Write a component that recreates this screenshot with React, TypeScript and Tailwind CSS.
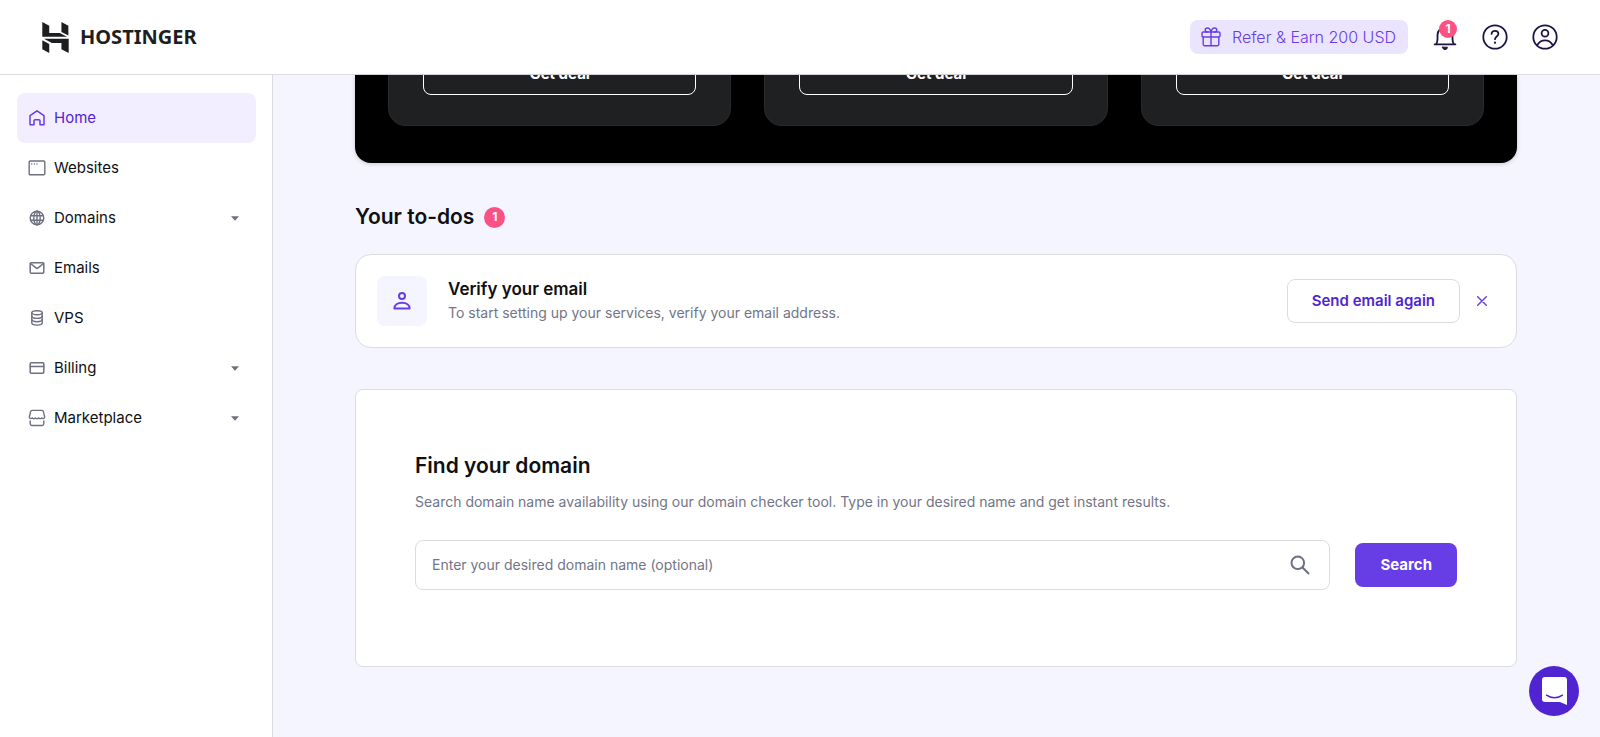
import type { ReactNode } from 'react';

type IconProps = { className?: string };

const line = {
  fill: 'none',
  stroke: 'currentColor',
  strokeLinecap: 'round' as const,
  strokeLinejoin: 'round' as const,
};

function LogoMark() {
  return (
    <svg viewBox="129 63 80 94" className="h-[31px] w-[27px] text-[#1d1e20]" fill="currentColor" aria-hidden="true">
      <path d="M129 63 150 74V96H182L204 108H129Z" />
      <path d="M187 63 208 74V104L187 93Z" />
      <path d="M129 118 150 130V157L129 146Z" />
      <path d="M134 114H209V157L187 146V127H158Z" />
    </svg>
  );
}

function HomeIcon({ className }: IconProps) {
  return (
    <svg viewBox="0 0 18 18" className={className} {...line} strokeWidth="1.500" aria-hidden="true">
      <path d="M2 6.600 9 1.800l7 4.800v9.100h-4v-3.900a1.100 1.100 0 0 0-1.100-1.100H7.100A1.100 1.100 0 0 0 6 11.800v3.900H2Z" />
    </svg>
  );
}

function WebsitesIcon({ className }: IconProps) {
  return (
    <svg viewBox="0 0 18 18" className={className} {...line} strokeWidth="1.400" aria-hidden="true">
      <rect x="1.200" y="2" width="15.600" height="13.800" rx="1" />
      <path d="M3.700 5h.1M6.300 5h.1M8.900 5h.1" />
    </svg>
  );
}

function GlobeIcon({ className }: IconProps) {
  return (
    <svg viewBox="0 0 18 18" className={className} {...line} strokeWidth="1.400" aria-hidden="true">
      <circle cx="9" cy="9" r="6.800" />
      <ellipse cx="9" cy="9" rx="3.200" ry="6.800" />
      <path d="M9 2.200v13.600M2.700 6.700h12.600M2.700 11.300h12.600" />
    </svg>
  );
}

function MailIcon({ className }: IconProps) {
  return (
    <svg viewBox="0 0 18 18" className={className} {...line} strokeWidth="1.500" aria-hidden="true">
      <rect x="2.200" y="3.700" width="13.600" height="10.600" rx="1" />
      <path d="m2.500 4.500 5.800 4.600a1.100 1.100 0 0 0 1.400 0l5.800-4.600" />
    </svg>
  );
}

function DatabaseIcon({ className }: IconProps) {
  return (
    <svg viewBox="0 0 18 18" className={className} {...line} strokeWidth="1.400" aria-hidden="true">
      <ellipse cx="9" cy="3.800" rx="5.200" ry="2" />
      <path d="M3.800 4v10c0 1.200 2.300 2.100 5.200 2.100s5.200-.9 5.200-2.100V4" />
      <path d="M3.800 7.300c0 1.200 2.300 2.100 5.200 2.100s5.200-.9 5.200-2.100M3.800 10.600c0 1.200 2.300 2.100 5.200 2.100s5.200-.9 5.200-2.100" />
    </svg>
  );
}

function CardIcon({ className }: IconProps) {
  return (
    <svg viewBox="0 0 18 18" className={className} {...line} strokeWidth="1.500" aria-hidden="true">
      <rect x="2.200" y="3.700" width="13.600" height="10.600" rx="1" />
      <path d="M2.200 7.500h13.600" />
    </svg>
  );
}

function StoreIcon({ className }: IconProps) {
  return (
    <svg viewBox="0 0 18 18" className={className} {...line} strokeWidth="1.400" aria-hidden="true">
      <path d="M1.300 8.200 2.600 2.600c.2-.8.700-1.200 1.500-1.200h9.800c.8 0 1.300.4 1.500 1.200l1.300 5.600c-.2 1.600-2.100 1.900-3 .7-.9 1.100-2.400 1.100-3.100 0-.8 1.100-2.400 1.100-3.200 0-.7 1.100-2.300 1.100-3.100 0-.9 1.200-2.700.9-3-.7Z" />
      <path d="M2.200 12v2.800c0 1.100.6 1.700 1.700 1.700h10.200c1.100 0 1.700-.6 1.700-1.700V12" />
    </svg>
  );
}

function GiftIcon({ className }: IconProps) {
  return (
    <svg viewBox="0 0 20 20" className={className} {...line} strokeWidth="1.400" aria-hidden="true">
      <rect x="1" y="5" width="18" height="5" rx="1.200" />
      <path d="M2.200 10v7.300c0 .9.500 1.400 1.400 1.400h12.800c.9 0 1.400-.5 1.400-1.400V10M10 5v13.700" />
      <path d="M10 5C9.400 2.600 8.300 1 6.600 1 5 1 4.200 2 4.200 3S5 5 6.600 5M10 5c.6-2.400 1.700-4 3.400-4 1.600 0 2.400 1 2.400 2s-.8 2-2.400 2" />
    </svg>
  );
}

function BellIcon({ className }: IconProps) {
  return (
    <svg viewBox="0 0 26 26" className={className} {...line} strokeWidth="1.800" aria-hidden="true">
      <path d="M2.600 20.300h20.800M4.200 20c1-1.500 1.300-3 1.300-5v-4a7.500 7.500 0 0 1 15 0v4c0 2 .3 3.500 1.300 5" />
      <path d="M10.600 23.200h4.800a2.400 2.400 0 0 1-4.800 0Z" fill="currentColor" strokeWidth="1" />
    </svg>
  );
}

function HelpIcon({ className }: IconProps) {
  return (
    <svg viewBox="0 0 26 26" className={className} {...line} strokeWidth="1.800" aria-hidden="true">
      <circle cx="13" cy="13" r="11.700" />
      <path d="M9.600 9.900c0-1.900 1.500-3.100 3.400-3.100s3.400 1.200 3.400 3c0 2.600-3.400 2.700-3.400 5.400" />
      <path d="M13 18.700v.1" strokeWidth="2.200" />
    </svg>
  );
}

function AccountIcon({ className }: IconProps) {
  return (
    <svg viewBox="0 0 26 26" className={className} {...line} strokeWidth="1.800" aria-hidden="true">
      <circle cx="13" cy="13" r="11.700" />
      <circle cx="13" cy="9.200" r="3.400" />
      <path d="M5.200 21.200c1.700-3 4.500-4.900 7.800-4.900s6.100 1.900 7.800 4.900" />
    </svg>
  );
}

function PersonIcon({ className }: IconProps) {
  return (
    <svg viewBox="0 0 20 20" className={className} {...line} strokeWidth="2" aria-hidden="true">
      <circle cx="10" cy="5" r="3" />
      <path d="M2.400 17.400c0-3.500 3.200-5.600 7.600-5.600s7.600 2.100 7.600 5.600Z" />
    </svg>
  );
}

function SearchIcon({ className }: IconProps) {
  return (
    <svg viewBox="0 0 20 20" className={className} {...line} strokeWidth="2" strokeLinecap="butt" aria-hidden="true">
      <circle cx="7.800" cy="7.800" r="6.300" />
      <path d="m12.300 12.300 6.700 6.700" />
    </svg>
  );
}

type NavItem = {
  label: string;
  icon: (props: IconProps) => ReactNode;
  active?: boolean;
  expandable?: boolean;
};

const navItems: NavItem[] = [
  { label: 'Home', icon: HomeIcon, active: true },
  { label: 'Websites', icon: WebsitesIcon },
  { label: 'Domains', icon: GlobeIcon, expandable: true },
  { label: 'Emails', icon: MailIcon },
  { label: 'VPS', icon: DatabaseIcon },
  { label: 'Billing', icon: CardIcon, expandable: true },
  { label: 'Marketplace', icon: StoreIcon, expandable: true },
];

function Header() {
  return (
    <header className="flex h-[75px] shrink-0 items-center justify-between border-b border-[#dadce0] bg-white pr-[42px] pl-[42px]">
      <a href="#home" className="flex items-center gap-[11px]">
        <LogoMark />
        <span className="font-['Noto_Sans'] text-[20px] leading-6 font-bold text-[#1d1e20]">HOSTINGER</span>
      </a>
      <div className="flex items-center gap-6">
        <a href="#refer" className="flex h-[34px] items-center gap-[11px] rounded-lg bg-[#ebe4ff] pr-3 pl-[11px] text-[#673de6]">
          <GiftIcon className="size-5" />
          <span className="text-[16px] leading-6 font-light">Refer &amp; Earn 200 USD</span>
        </a>
        <button type="button" aria-label="Notifications" className="relative text-[#1f1346]">
          <BellIcon className="size-[26px]" />
          <span className="absolute -top-[4px] left-[7px] flex size-[18px] items-center justify-center rounded-full bg-[#fc5185] text-[12px] leading-none font-bold text-white">
            1
          </span>
        </button>
        <button type="button" aria-label="Help" className="text-[#1f1346]">
          <HelpIcon className="size-[26px]" />
        </button>
        <button type="button" aria-label="Account" className="text-[#1f1346]">
          <AccountIcon className="size-[26px]" />
        </button>
      </div>
    </header>
  );
}

function Sidebar() {
  return (
    <nav aria-label="Main" className="w-[273px] shrink-0 border-r border-[#dadce0] bg-white pt-[18px] pr-4 pl-[17px]">
      <ul>
        {navItems.map(({ label, icon: Icon, active, expandable }) => (
          <li key={label}>
            <a
              href={`#${label.toLowerCase()}`}
              aria-current={active ? 'page' : undefined}
              className={`flex h-[50px] items-center gap-2 rounded-lg pr-[17px] pl-[11px] text-[15px] ${
                active ? 'bg-[#f3eeff] text-[#5025d1]' : 'text-[#0f1012]'
              }`}
            >
              <Icon className={`size-[18px] ${active ? 'text-[#673de6]' : 'text-[#6d7081]'}`} />
              <span className="grow">{label}</span>
              {expandable && (
                <svg viewBox="0 0 8 5" className="h-[5px] w-2 text-[#6d7081]" fill="currentColor" aria-hidden="true">
                  <path d="M0 .3h8L4 4.700Z" />
                </svg>
              )}
            </a>
          </li>
        ))}
      </ul>
    </nav>
  );
}

function Deals() {
  return (
    <section aria-label="Deals" className="rounded-b-2xl bg-black shadow-[0_1px_4px_rgba(0,0,0,0.18)]">
      <div className="flex h-[88px] items-end gap-[33px] overflow-hidden px-[33px] pb-[37px]">
        {['deal-1', 'deal-2', 'deal-3'].map((id) => (
          <div key={id} className="flex-1 rounded-b-[18px] border border-t-0 border-[#2a2b2d] bg-[#1f2022] px-[34px] pb-[30px]">
            <button
              type="button"
              className="h-[42px] w-full rounded-lg border border-white text-[15px] leading-5 font-bold text-white"
            >
              Get deal
            </button>
          </div>
        ))}
      </div>
    </section>
  );
}

function Todos() {
  return (
    <section className="mt-[41px]">
      <h2 className="flex items-center gap-[10px] text-[21px] leading-[26px] font-semibold text-[#0f1012]">
        Your to-dos
        <span className="flex size-[21px] items-center justify-center rounded-full bg-[#fc5185] text-[12px] leading-none font-bold text-white">
          1
        </span>
      </h2>
      <div className="mt-6 flex items-center rounded-2xl border border-[#dadce0] bg-white py-[21px] pr-[26px] pl-[21px]">
        <div className="flex size-[50px] items-center justify-center rounded-lg bg-[#f4f5ff] text-[#673de6]">
          <PersonIcon className="size-5" />
        </div>
        <div className="ml-[21px] grow">
          <h3 className="text-[17px] leading-6 font-semibold text-[#0f1012]">Verify your email</h3>
          <p className="pb-px text-[14px] leading-6 text-[#727586]">
            To start setting up your services, verify your email address.
          </p>
        </div>
        <button
          type="button"
          className="h-11 rounded-lg border border-[#dadce0] px-6 text-[15px] font-semibold text-[#5025d1]"
        >
          Send email again
        </button>
        <button type="button" aria-label="Dismiss" className="ml-[14px] p-[3px] text-[#673de6]">
          <svg viewBox="0 0 10 10" className="size-[10px]" {...line} strokeWidth="1.400" aria-hidden="true">
            <path d="m.7.7 8.600 8.600M9.300.7.7 9.300" />
          </svg>
        </button>
      </div>
    </section>
  );
}

function DomainSearch() {
  return (
    <section className="mt-[41px] rounded-lg border border-[#dadce0] bg-white px-[59px] pt-[63px] pb-[76px]">
      <h2 className="text-[21px] leading-[26px] font-semibold text-[#0f1012]">Find your domain</h2>
      <p className="mt-[11px] text-[14px] leading-6 text-[#727586]">
        Search domain name availability using our domain checker tool. Type in your desired name and get instant
        results.
      </p>
      <form className="mt-[26px] flex items-center gap-[25px]">
        <label className="flex h-[50px] grow items-center rounded-lg border border-[#dadce0] pr-[19px] pl-4">
          <input
            type="text"
            aria-label="Domain name"
            placeholder="Enter your desired domain name (optional)"
            className="min-w-0 grow text-[14px] leading-6 text-[#0f1012] outline-none placeholder:text-[#727586]"
          />
          <SearchIcon className="size-5 text-[#6d7081]" />
        </label>
        <button type="button" className="h-11 rounded-lg bg-[#673de6] px-[25px] text-[15px] font-bold text-white">
          Search
        </button>
      </form>
    </section>
  );
}

function ChatLauncher() {
  return (
    <button
      type="button"
      aria-label="Open chat"
      className="fixed right-[21px] bottom-[21px] flex size-[50px] items-center justify-center rounded-full bg-[#5025d1]"
    >
      <svg viewBox="0 0 25 28" className="h-7 w-[25px]" aria-hidden="true">
        <path d="M3 0h19a3 3 0 0 1 3 3v25l-7-3H3a3 3 0 0 1-3-3V3a3 3 0 0 1 3-3Z" fill="#fff" />
        <path d="M4.500 18.200c4.600 3.400 11.400 3.400 16 0" fill="none" stroke="#5025d1" strokeWidth="1.500" strokeLinecap="round" />
      </svg>
    </button>
  );
}

export default function App() {
  return (
    <div className="flex min-h-screen flex-col bg-[#f4f5ff] font-['Inter',sans-serif]">
      <Header />
      <div className="flex grow">
        <Sidebar />
        <main className="min-w-0 grow pr-[83px] pb-[69px] pl-[82px]">
          <Deals />
          <Todos />
          <DomainSearch />
        </main>
      </div>
      <ChatLauncher />
    </div>
  );
}
